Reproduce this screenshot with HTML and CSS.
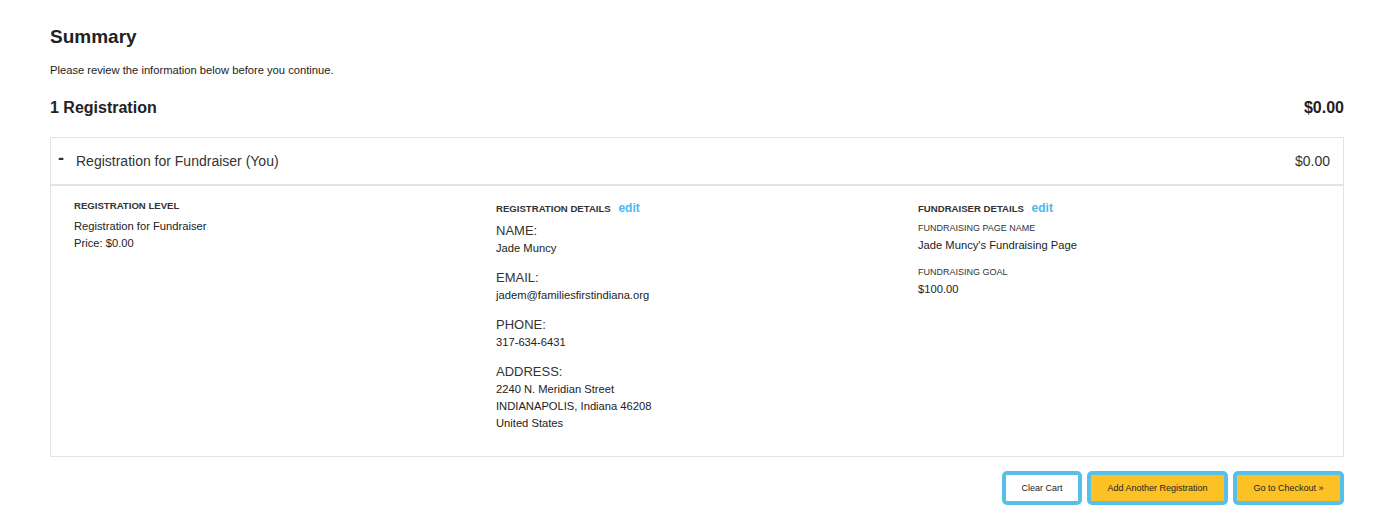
FILE: index.html
```html
<!DOCTYPE html>
<html lang="en">
<head>
    <meta charset="UTF-8">
    <title>Summary</title>
    <link rel="stylesheet" href="styles.css">
</head>
<body>

<div class="page">
    <h1>Summary</h1>
    <p class="intro">Please review the information below before you continue.</p>

    <div class="cart-total">
        <h2>1 Registration</h2>
        <span class="total">$0.00</span>
    </div>

    <!-- Registration item -->
    <div class="reg-box">
        <div class="reg-head">
            <span class="toggle">-</span>
            <span class="reg-title">Registration for Fundraiser (You)</span>
            <span class="reg-price">$0.00</span>
        </div>
        <div class="reg-body">
            <div class="col">
                <h4>REGISTRATION LEVEL</h4>
                <div class="value">Registration for Fundraiser</div>
                <div class="value">Price: $0.00</div>
            </div>
            <div class="col">
                <h4 class="with-edit">REGISTRATION DETAILS <a href="#">edit</a></h4>
                <div class="field">
                    <div class="label">NAME:</div>
                    <div class="value">Jade Muncy</div>
                </div>
                <div class="field">
                    <div class="label">EMAIL:</div>
                    <div class="value">jadem@familiesfirstindiana.org</div>
                </div>
                <div class="field">
                    <div class="label">PHONE:</div>
                    <div class="value">317-634-6431</div>
                </div>
                <div class="field">
                    <div class="label">ADDRESS:</div>
                    <div class="value">2240 N. Meridian Street</div>
                    <div class="value">INDIANAPOLIS, Indiana 46208</div>
                    <div class="value">United States</div>
                </div>
            </div>
            <div class="col">
                <h4 class="with-edit">FUNDRAISER DETAILS <a href="#">edit</a></h4>
                <div class="field fund">
                    <div class="small-label">FUNDRAISING PAGE NAME</div>
                    <div class="value">Jade Muncy's Fundraising Page</div>
                </div>
                <div class="field fund">
                    <div class="small-label">FUNDRAISING GOAL</div>
                    <div class="value">$100.00</div>
                </div>
            </div>
        </div>
    </div>

    <div class="actions">
        <button class="btn btn-white">Clear Cart</button>
        <button class="btn btn-yellow">Add Another Registration</button>
        <button class="btn btn-yellow btn-checkout">Go to Checkout &raquo;</button>
    </div>
</div>

</body>
</html>
```

FILE: styles.css
```css
body {
    font-family: 'Liberation Sans', Arial, sans-serif;
    margin: 0;
    padding: 0;
    background: #fff;
    color: #222;
}
.page {
    padding: 25px 51px 0 50px;
}
h1 {
    font-size: 19px;
    font-weight: bold;
    margin: 0;
    line-height: 24px;
}
.intro {
    font-size: 11.2px;
    margin: 14px 0 0 0;
    line-height: 14px;
}
.cart-total {
    display: flex;
    justify-content: space-between;
    align-items: center;
    margin-top: 21px;
}
.cart-total h2 {
    font-size: 16px;
    margin: 0;
    line-height: 20px;
}
.total {
    font-size: 16px;
    font-weight: bold;
}
.reg-box {
    margin-top: 19px;
    border: 1px solid #e3e3e3;
}
.reg-head {
    display: flex;
    align-items: center;
    height: 46px;
    padding: 0 13px 0 7px;
    border-bottom: 2px solid #e3e3e3;
    font-size: 14px;
    color: #333;
}
.toggle {
    font-size: 18px;
    font-weight: bold;
    width: 18px;
    margin-top: -6px;
}
.reg-title {
    flex: 1;
}
.reg-body {
    display: grid;
    grid-template-columns: repeat(3, minmax(0, 1fr));
    padding: 13px 3px 12px 23px;
}
.col h4 {
    font-size: 9.6px;
    font-weight: bold;
    color: #333;
    margin: 0 0 5px 0;
    line-height: 14px;
}
.col h4.with-edit {
    margin-top: 2px;
    margin-bottom: 6px;
}
.col h4 a {
    color: #4db7ea;
    font-size: 12px;
    text-decoration: none;
    margin-left: 5px;
}
.value {
    font-size: 11.2px;
    line-height: 17px;
    color: #222;
}
.field {
    margin-bottom: 12px;
}
.label {
    font-size: 13px;
    color: #333;
    line-height: 17px;
    margin-bottom: 1px;
}
.small-label {
    font-size: 9px;
    line-height: 13px;
    margin-bottom: 2px;
    color: #333;
}
.actions {
    display: flex;
    justify-content: flex-end;
    gap: 5px;
    margin-top: 14px;
}
.btn {
    font-family: 'Liberation Sans', Arial, sans-serif;
    font-size: 9px;
    color: #222;
    border: 4px solid #56bfea;
    border-radius: 5px;
    height: 34px;
    cursor: pointer;
}
.btn-white {
    background: #fff;
    width: 80px;
}
.btn-yellow {
    background: #fcc225;
    width: 141px;
}
.btn-checkout {
    width: 111px;
}
```
